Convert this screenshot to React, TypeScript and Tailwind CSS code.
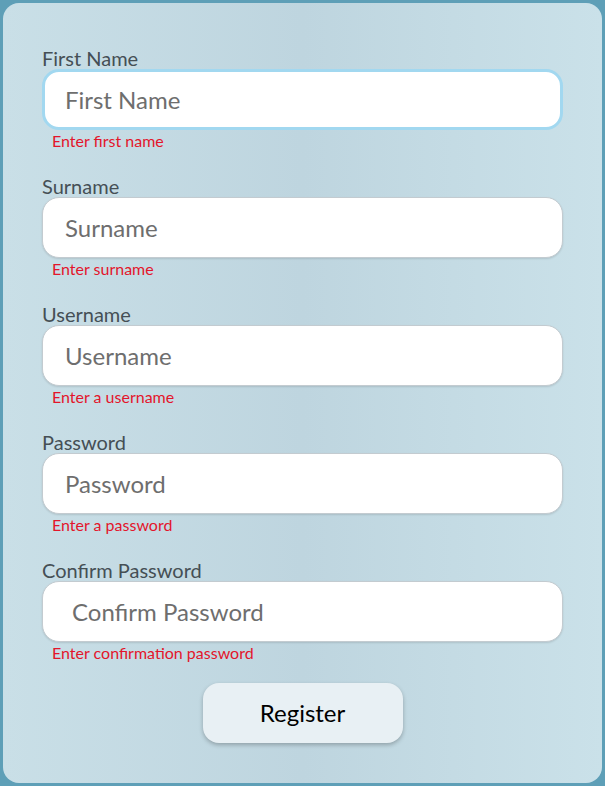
import type { FC } from "react";

interface FieldProps {
  label: string;
  placeholder: string;
  error: string;
  focused?: boolean;
  indent?: boolean;
}

const Field: FC<FieldProps> = ({ label, placeholder, error, focused, indent }) => {
  return (
    <div className="flex flex-col">
      <label className="h-[22px] text-[20px] leading-[22px] text-[#454f55]">{label}</label>
      <input
        readOnly
        placeholder={placeholder}
        className={
          focused
            ? "mt-0 h-[61px] w-full rounded-[17px] border-[3px] border-[#a2d8f0] bg-white pl-[20px] text-[24px] text-[#333] outline-none placeholder:text-[#6e6e6e]"
            : indent
              ? "mt-0 h-[61px] w-full rounded-[17px] border border-[#c3cbd0] bg-white pl-[29px] text-[24px] text-[#333] shadow-[0_1px_2px_rgba(0,0,0,0.12)] outline-none placeholder:text-[#6e6e6e]"
              : "mt-0 h-[61px] w-full rounded-[17px] border border-[#c3cbd0] bg-white pl-[22px] text-[24px] text-[#333] shadow-[0_1px_2px_rgba(0,0,0,0.12)] outline-none placeholder:text-[#6e6e6e]"
        }
      />
      <span className="mt-[2px] h-[18px] pl-[10px] text-[16px] leading-[18px] text-[#e3152b]">{error}</span>
    </div>
  );
};

const App = () => {
  return (
    <div className="flex h-[786px] w-[605px] bg-[#5e9fb7] p-[3px] font-['Lato',sans-serif]">
      <div className="flex w-full flex-col rounded-[16px] bg-linear-to-r from-[#c9dfe7] via-[#bed5df] to-[#cae1e9] px-[39px] pt-[44px] pb-[40px]">
        <div className="flex flex-col gap-[25px]">
          <Field label="First Name" placeholder="First Name" error="Enter first name" focused />
          <Field label="Surname" placeholder="Surname" error="Enter surname" />
          <Field label="Username" placeholder="Username" error="Enter a username" />
          <Field label="Password" placeholder="Password" error="Enter a password" />
          <Field label="Confirm Password" placeholder="Confirm Password" error="Enter confirmation password" indent />
        </div>
        <div className="mt-[21px] flex justify-center">
          <button className="h-[60px] w-[200px] rounded-[16px] bg-[#e8f0f4] text-[24px] text-black shadow-[0_2px_4px_rgba(0,0,0,0.25)]">
            Register
          </button>
        </div>
      </div>
    </div>
  );
};

export default App;
